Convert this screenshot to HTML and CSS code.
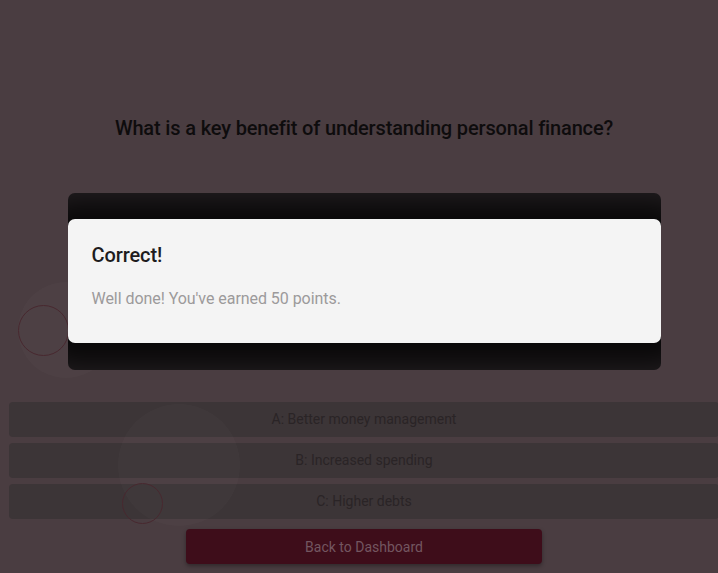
FILE: index.html
```html
<!DOCTYPE html>
<html lang="en">
<head>
    <meta charset="UTF-8">
    <meta name="viewport" content="width=device-width, initial-scale=1.0">
    <title>Quiz</title>
    <link rel="stylesheet" href="styles.css">
</head>
<body>
<div class="screen">

    <!-- background decorations -->
    <div class="glow glow-left"></div>
    <div class="ring ring-left"></div>

    <div class="quiz">
        <h1 class="question">What is a key benefit of understanding personal finance?</h1>

        <div class="media-card">
            <div class="dialog">
                <h2>Correct!</h2>
                <p>Well done! You've earned 50 points.</p>
            </div>
        </div>

        <div class="options">
            <div class="option">A: Better money management</div>
            <div class="option">B: Increased spending</div>
            <div class="option">C: Higher debts</div>
        </div>

        <button class="back-btn">Back to Dashboard</button>
    </div>

    <div class="glow glow-bottom"></div>
    <div class="ring ring-bottom"></div>
</div>
</body>
</html>
```

FILE: styles.css
```css
body {
    margin: 0;
    padding: 0;
    font-family: Roboto, 'Liberation Sans', sans-serif;
    background: #4a3d41;
    overflow: hidden;
}

.screen {
    position: relative;
    width: 718px;
    height: 573px;
    overflow: hidden;
}

.quiz {
    position: relative;
    width: 710px;
    margin-left: 9px;
    padding-top: 116px;
    display: flex;
    flex-direction: column;
    align-items: center;
}

.question {
    margin: 0;
    font-size: 20px;
    line-height: 24px;
    font-weight: 500;
    letter-spacing: -0.15px;
    color: #0e0c0d;
    text-align: center;
}

.media-card {
    width: 593px;
    height: 177px;
    margin-top: 53px;
    background: #221e20;
    border-radius: 7px;
    overflow: hidden;
    padding-top: 26px;
    box-sizing: border-box;
}

.dialog {
    height: 124px;
    box-sizing: border-box;
    padding: 24px 24px 0;
    background: #f4f4f4;
    border-radius: 7px;
    box-shadow: 0 2px 26px 20px rgba(0, 0, 0, 0.72);
}

.dialog h2 {
    margin: 0;
    font-size: 20px;
    line-height: 24px;
    font-weight: 500;
    letter-spacing: -0.1px;
    color: #1e1c1d;
}

.dialog p {
    margin: 22px 0 0;
    font-size: 16px;
    line-height: 20px;
    letter-spacing: -0.05px;
    color: #9c9a9b;
}

.options {
    width: 100%;
    margin-top: 32px;
    display: flex;
    flex-direction: column;
    gap: 6px;
}

.option {
    height: 35px;
    line-height: 35px;
    text-align: center;
    font-size: 14px;
    color: #2a2426;
    background: #3c3537;
    border-radius: 4px;
}

.back-btn {
    width: 356px;
    height: 35px;
    margin-top: 10px;
    border: none;
    border-radius: 4px;
    background: #3e0d1a;
    color: #735660;
    font-family: inherit;
    font-size: 14px;
    box-shadow: 0 2px 4px rgba(0, 0, 0, 0.35);
}

/* decorations */
.glow {
    position: absolute;
    border-radius: 50%;
    background: rgba(255, 255, 255, 0.02);
}

.glow-left {
    left: 18px;
    top: 282px;
    width: 96px;
    height: 96px;
}

.glow-bottom {
    left: 118px;
    top: 404px;
    width: 122px;
    height: 122px;
}

.ring {
    position: absolute;
    border-radius: 50%;
    border: 1.5px solid #48282f;
    box-sizing: border-box;
}

.ring-left {
    left: 18px;
    top: 305px;
    width: 51px;
    height: 51px;
}

.ring-bottom {
    left: 122px;
    top: 483px;
    width: 41px;
    height: 41px;
}
```
